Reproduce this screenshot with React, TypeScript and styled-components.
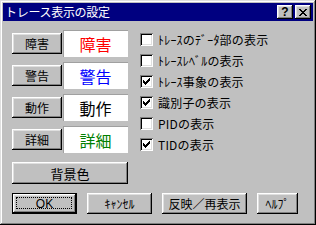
import React from "react";
import styled, { createGlobalStyle, css } from "styled-components";

const Global = createGlobalStyle`
  html, body { margin: 0; padding: 0; background: #c0c0c0; }
  body { font-family: "Noto Sans CJK JP", "DejaVu Sans", sans-serif; }
`;

const raised = css`
  box-shadow: inset -1px -1px #000, inset 1px 1px #fff, inset -2px -2px #808080, inset 2px 2px #dfdfdf;
`;

const Window = styled.div`
  width: 316px;
  height: 225px;
  box-sizing: border-box;
  padding: 3px;
  background: #c0c0c0;
  box-shadow: inset -1px -1px #000, inset 1px 1px #dfdfdf, inset -2px -2px #808080, inset 2px 2px #fff;
  display: flex;
  flex-direction: column;
`;

const TitleBar = styled.div`
  height: 18px;
  background: #000080;
  display: flex;
  align-items: center;
  padding: 0 2px 0 2px;
  color: #fff;
  font-size: 12px;
  line-height: 18px;
`;

const TitleText = styled.span`
  flex: 1;
  letter-spacing: -0.3px;
`;

const TitleButtons = styled.div`
  display: flex;
  gap: 2px;
`;

const CaptionButton = styled.div`
  width: 16px;
  height: 14px;
  background: #c0c0c0;
  ${raised};
  display: flex;
  align-items: center;
  justify-content: center;
  color: #000;
  font-family: "Liberation Sans", sans-serif;
  font-weight: bold;
  font-size: 12px;
  line-height: 14px;
`;

const Content = styled.div`
  padding: 9px 0 0 9px;
  display: flex;
  flex-direction: column;
`;

const Main = styled.div`
  display: flex;
`;

const LeftCol = styled.div`
  width: 116px;
  display: flex;
  flex-direction: column;
  gap: 5px;
`;

const SampleRow = styled.div`
  height: 27px;
  display: flex;
  align-items: center;
  gap: 1px;
`;

const Button = styled.div<{ $w?: number; $h?: number }>`
  width: ${(p) => (p.$w ? `${p.$w}px` : "auto")};
  height: ${(p) => p.$h ?? 21}px;
  box-sizing: border-box;
  background: #c0c0c0;
  ${raised};
  display: flex;
  align-items: center;
  justify-content: center;
  font-size: 12px;
  color: #000;
  flex-shrink: 0;
`;

const WideButton = styled(Button)`
  margin-top: 4px;
  font-size: 13px;
`;

const DefaultButton = styled.div<{ $w: number }>`
  width: ${(p) => p.$w}px;
  height: 21px;
  box-sizing: border-box;
  border: 1px solid #000;
  background: #c0c0c0;
  ${raised};
  display: flex;
  align-items: center;
  justify-content: center;
  font-family: "Liberation Sans", sans-serif;
  font-size: 12px;
  position: relative;
`;

const FocusRect = styled.div`
  position: absolute;
  left: 3px;
  right: 4px;
  top: 3px;
  bottom: 4px;
  border: 1px dotted #000;
`;

const SampleBox = styled.div<{ $color: string }>`
  flex: 1;
  height: 27px;
  box-sizing: border-box;
  background: #fff;
  box-shadow: inset 1px 1px #a0a0a0;
  color: ${(p) => p.$color};
  font-size: 16px;
  font-weight: 400;
  display: flex;
  align-items: center;
  justify-content: center;
`;

const RightCol = styled.div`
  margin-left: 12px;
  margin-top: -1px;
  display: flex;
  flex-direction: column;
`;

const CheckRow = styled.div`
  height: 21px;
  display: flex;
  align-items: center;
  gap: 5px;
  font-size: 12px;
  color: #000;
`;

const CheckLabel = styled.span`
  letter-spacing: 0.2px;
`;

const CheckBox = styled.div`
  width: 13px;
  height: 13px;
  box-sizing: border-box;
  background: #fff;
  box-shadow: inset 1px 1px #808080, inset -1px -1px #fff, inset 2px 2px #000, inset -2px -2px #dfdfdf;
  display: flex;
  align-items: center;
  justify-content: center;
  flex-shrink: 0;
`;

const Footer = styled.div`
  display: flex;
  gap: 10px;
  margin-top: 9px;
`;

const samples = [
  { label: "障害", color: "#ff0000" },
  { label: "警告", color: "#0000ff" },
  { label: "動作", color: "#000000" },
  { label: "詳細", color: "#008000" },
];

const checks = [
  { label: "ﾄﾚｰｽのﾃﾞｰﾀ部の表示", on: false },
  { label: "ﾄﾚｰｽﾚﾍﾞﾙの表示", on: false },
  { label: "ﾄﾚｰｽ事象の表示", on: true },
  { label: "識別子の表示", on: true },
  { label: "PIDの表示", on: false },
  { label: "TIDの表示", on: true },
];

const Check = () => (
  <svg width="7" height="7" viewBox="0 0 7 7">
    <path d="M0 2h1v1h1v1h1V3h1V2h1V1h1V0h1v3H6v1H5v1H4v1H3v1H2V6H1V5H0z" fill="#000" />
  </svg>
);

export default function App() {
  return (
    <>
      <Global />
      <Window>
        <TitleBar>
          <TitleText>トレース表示の設定</TitleText>
          <TitleButtons>
            <CaptionButton>?</CaptionButton>
            <CaptionButton>
              <svg width="8" height="7" viewBox="0 0 8 7">
                <path d="M0 0h2v1h1v1h2V1h1V0h2v1H7v1H6v1H5v1h1v1h1v1h1v1H6V6H5V5H3v1H2v1H0V6h1V5h1V4h1V3H2V2H1V1H0z" fill="#000" />
              </svg>
            </CaptionButton>
          </TitleButtons>
        </TitleBar>
        <Content>
          <Main>
            <LeftCol>
              {samples.map((s) => (
                <SampleRow key={s.label}>
                  <Button $w={50}>{s.label}</Button>
                  <SampleBox $color={s.color}>{s.label}</SampleBox>
                </SampleRow>
              ))}
              <WideButton $h={22}>背景色</WideButton>
            </LeftCol>
            <RightCol>
              {checks.map((c) => (
                <CheckRow key={c.label}>
                  <CheckBox>{c.on && <Check />}</CheckBox>
                  <CheckLabel>{c.label}</CheckLabel>
                </CheckRow>
              ))}
            </RightCol>
          </Main>
          <Footer>
            <DefaultButton $w={65}>
              OK
              <FocusRect />
            </DefaultButton>
            <Button $w={65}>ｷｬﾝｾﾙ</Button>
            <Button $w={85}>反映／再表示</Button>
            <Button $w={41}>ﾍﾙﾌﾟ</Button>
          </Footer>
        </Content>
      </Window>
    </>
  );
}
